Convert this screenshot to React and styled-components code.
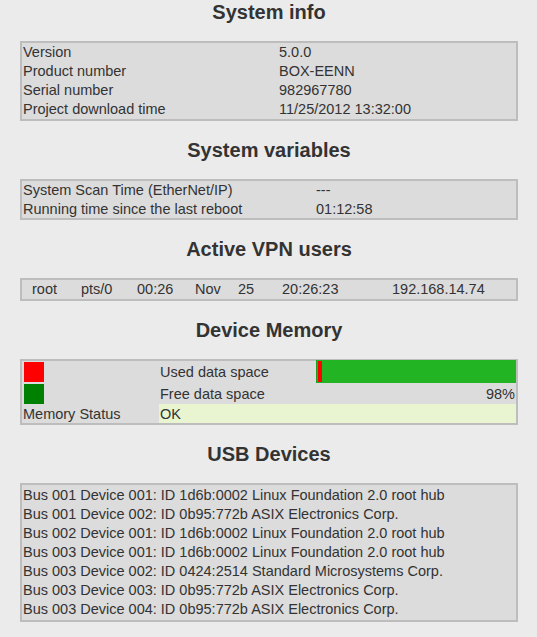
import * as React from 'react';
import styled, { createGlobalStyle } from 'styled-components';

const GlobalStyle = createGlobalStyle`
  html, body {
    margin: 0;
    padding: 0;
    background: #ebebeb;
  }
  body {
    font-family: "Liberation Sans", Arial, sans-serif;
    color: #333;
  }
`;

const Page = styled.div`
  width: 537px;
  box-sizing: border-box;
  padding: 0 19px 14px 20px;
  display: flex;
  flex-direction: column;
  gap: 17px;
`;

const Section = styled.section`
  display: flex;
  flex-direction: column;
`;

const Title = styled.h2`
  margin: 0 0 16px;
  height: 25px;
  line-height: 25px;
  font-size: 20px;
  font-weight: bold;
  text-align: center;
  color: #333;
`;

const Panel = styled.div`
  border: 2px solid #bdbdbd;
  background: #dcdcdc;
  font-size: 14.5px;
`;

const InfoGrid = styled.div`
  display: grid;
  grid-template-columns: ${({ $split }) => $split}px 1fr;
  grid-auto-rows: ${({ $row }) => $row || 19}px;
  padding: 0 1px;
  line-height: ${({ $row }) => $row || 19}px;
  white-space: nowrap;
`;

const VpnRow = styled.div`
  display: grid;
  grid-template-columns: 49px 56px 58px 43px 44px 110px 1fr;
  padding-left: 10px;
  line-height: 19px;
`;

const MemGrid = styled.div`
  display: grid;
  grid-template-columns: 137px 157px 1fr;
  grid-template-rows: 22px 21px 19px;
`;

const Cell = styled.div`
  display: flex;
  align-items: center;
  padding: 0 1px;
  justify-content: ${({ $right }) => ($right ? 'flex-end' : 'flex-start')};
`;

const Swatch = styled.div`
  width: 20px;
  height: 20px;
  margin-left: 1px;
  background: ${({ $color }) => $color};
`;

const Bar = styled.div`
  display: flex;
  height: 23px;
  margin-top: -1px;
  padding: 1px;
  box-sizing: border-box;
  background: #22b422;
  border-left: 1px solid #1e9e1e;
`;

const BarUsed = styled.div`
  height: 100%;
  background: #ff0000;
`;

const StatusCell = styled(Cell)`
  grid-column: 2 / 4;
  background: #e9f5d1;
`;

const UsbList = styled.div`
  padding: 1px;
  line-height: 19px;
  white-space: nowrap;
`;

const systemInfo = [
  ['Version', '5.0.0'],
  ['Product number', 'BOX-EENN'],
  ['Serial number', '982967780'],
  ['Project download time', '11/25/2012 13:32:00'],
];

const systemVars = [
  ['System Scan Time (EtherNet/IP)', '---'],
  ['Running time since the last reboot', '01:12:58'],
];

const vpnUser = ['root', 'pts/0', '00:26', 'Nov', '25', '20:26:23', '192.168.14.74'];

const usbDevices = [
  'Bus 001 Device 001: ID 1d6b:0002 Linux Foundation 2.0 root hub',
  'Bus 001 Device 002: ID 0b95:772b ASIX Electronics Corp.',
  'Bus 002 Device 001: ID 1d6b:0002 Linux Foundation 2.0 root hub',
  'Bus 003 Device 001: ID 1d6b:0002 Linux Foundation 2.0 root hub',
  'Bus 003 Device 002: ID 0424:2514 Standard Microsystems Corp.',
  'Bus 003 Device 003: ID 0b95:772b ASIX Electronics Corp.',
  'Bus 003 Device 004: ID 0b95:772b ASIX Electronics Corp.',
];

const freePercent = 98;

const App = () => {
  return (
    <Page>
      <GlobalStyle />
      <Section>
        <Title>System info</Title>
        <Panel>
          <InfoGrid $split={256}>
            {systemInfo.map(([label, value]) => (
              <React.Fragment key={label}>
                <div>{label}</div>
                <div>{value}</div>
              </React.Fragment>
            ))}
          </InfoGrid>
        </Panel>
      </Section>

      <Section>
        <Title>System variables</Title>
        <Panel>
          <InfoGrid $split={293} $row={18.5}>
            {systemVars.map(([label, value]) => (
              <React.Fragment key={label}>
                <div>{label}</div>
                <div>{value}</div>
              </React.Fragment>
            ))}
          </InfoGrid>
        </Panel>
      </Section>

      <Section>
        <Title>Active VPN users</Title>
        <Panel>
          <VpnRow>
            {vpnUser.map((v, i) => (
              <div key={i}>{v}</div>
            ))}
          </VpnRow>
        </Panel>
      </Section>

      <Section>
        <Title>Device Memory</Title>
        <Panel>
          <MemGrid>
            <Cell>
              <Swatch $color="#ff0000" />
            </Cell>
            <Cell>Used data space</Cell>
            <div>
              <Bar>
                <BarUsed style={{ width: `${100 - freePercent}%` }} />
              </Bar>
            </div>
            <Cell>
              <Swatch $color="#008000" />
            </Cell>
            <Cell>Free data space</Cell>
            <Cell $right>{freePercent}%</Cell>
            <Cell>Memory Status</Cell>
            <StatusCell>OK</StatusCell>
          </MemGrid>
        </Panel>
      </Section>

      <Section>
        <Title>USB Devices</Title>
        <Panel>
          <UsbList>
            {usbDevices.map((d, i) => (
              <div key={i}>{d}</div>
            ))}
          </UsbList>
        </Panel>
      </Section>
    </Page>
  );
};

export default App;
